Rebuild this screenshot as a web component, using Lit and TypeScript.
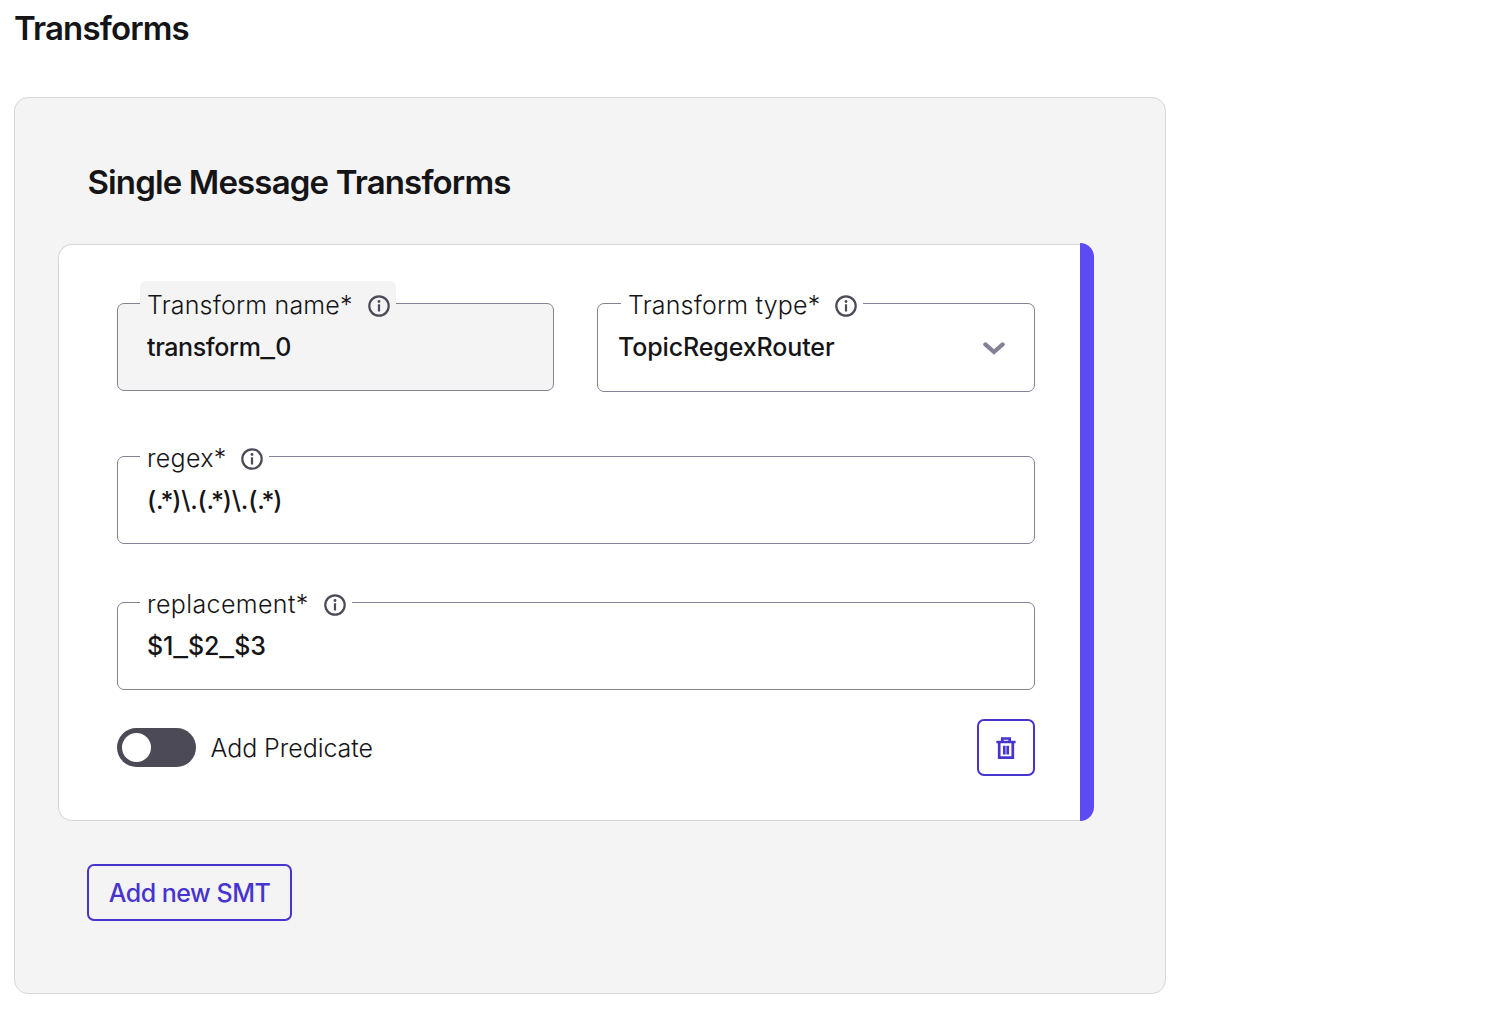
import { LitElement, html, css, svg } from "lit";
import { customElement, property } from "lit/decorators.js";

const infoIcon = html`<svg class="info" width="22" height="22" viewBox="0 0 22 22">
  <circle cx="11" cy="11" r="9.7" fill="none" stroke="#4b4a56" stroke-width="2.2" />
  <circle cx="11" cy="6.5" r="1.4" fill="#4b4a56" />
  <rect x="9.9" y="9.3" width="2.2" height="7.2" fill="#4b4a56" />
</svg>`;

const chevron = svg`<path d="M2.4 2.4 L11 10 L19.6 2.4" fill="none" stroke="#838195" stroke-width="4.2" stroke-linecap="round" stroke-linejoin="miter" />`;

/** Splits a value so that stars and underscores can be spaced on their own. */
const glyphs = (value: string) =>
  value.split(/(\.\*|_)/).map((part) =>
    part === "_"
      ? html`<span class="under">_</span>`
      : part === ".*"
        ? html`<span class="dot">.</span><span class="star">*</span>`
        : part
  );

@customElement("smt-field")
export class SmtField extends LitElement {
  @property() label = "";
  @property() value = "";
  @property({ type: Boolean }) select = false;
  @property({ type: Boolean }) locked = false;

  static styles = css`
    :host { display: block; }
    .box {
      box-sizing: border-box;
      position: relative;
      height: 88px;
      border: 1px solid #838195;
      border-radius: 7px;
      padding: 0 29px;
      display: flex;
      justify-content: space-between;
      align-items: center;
      background: #fff;
    }
    .locked { background: #f4f4f4; }
    .select { height: 89px; padding-left: 20px; }
    .legend {
      position: absolute;
      left: 22px;
      top: -23px;
      height: 46px;
      box-sizing: border-box;
      padding: 2px 6px 0 7px;
      display: flex;
      align-items: center;
      gap: 15px;
      background: #fff;
      border-radius: 6px 6px 0 0;
      font-weight: 300;
      letter-spacing: var(--label-spacing, 0.27px);
      line-height: 40px;
      white-space: nowrap;
    }
    .locked .legend { background: #f4f4f4; }
    .select .legend { left: 23px; }
    .info { display: block; flex: none; margin-top: 1px; }
    .value {
      font-weight: 500;
      letter-spacing: -0.2px;
      line-height: 40px;
      white-space: nowrap;
    }
    .locked .value { letter-spacing: -0.38px; }
    .select .value { letter-spacing: -0.12px; margin-bottom: 1px; }
    .under {
      display: inline-block;
      transform: translateY(1px) scaleX(1.28);
      padding: 0 1.8px;
    }
    .dot { letter-spacing: -3.2px; }
    .star { display: inline-block; transform: translateY(1px); letter-spacing: -1.3px; }
    .arrow { display: block; margin-top: 2px; }
  `;

  render() {
    return html`<div class="box ${this.select ? "select" : ""} ${this.locked ? "locked" : ""}">
      <span class="value">${glyphs(this.value)}</span>
      ${this.select
        ? html`<svg class="arrow" width="22" height="13" viewBox="0 0 22 13">${chevron}</svg>`
        : ""}
      <div class="legend"><span>${this.label}</span>${infoIcon}</div>
    </div>`;
  }
}

@customElement("app-root")
export class AppRoot extends LitElement {
  static styles = css`
    :host {
      display: block;
      height: 1028px;
      box-sizing: border-box;
      padding: 0 0 0 14px;
      overflow: hidden;
      background: #fff;
      color: #151517;
      font: 400 25px/40px Inter, "Liberation Sans", sans-serif;
    }
    h1, h2 { margin: 0; font-size: 33px; line-height: 40px; font-weight: 600; white-space: nowrap; letter-spacing: -0.85px; }
    h1 { padding: 8px 0 49px 0; }
    h2 { padding-left: 29.4px; }
    .panel {
      box-sizing: border-box;
      width: 1152px;
      height: 897px;
      border: 1px solid #d7d7d9;
      border-radius: 14px;
      background: #f4f4f4;
      padding: 64px 71px 0 43px;
    }
    .card {
      display: flex;
      height: 578px;
      margin: 41px 0 43px;
    }
    .body {
      flex: 1;
      box-sizing: border-box;
      margin-top: 1px;
      border: 1px solid #d7d7d9;
      border-right: 0;
      border-radius: 14px 0 0 14px;
      background: #fff;
      padding: 58px 45px 0 58px;
    }
    .bar { width: 14px; background: #5c4af5; border-radius: 0 14px 14px 0; }
    .pair { display: grid; grid-template-columns: 437px 438px; gap: 43px; height: 153px; --label-spacing: 0.18px; }
    .row { height: 146px; }
    .last { height: 116px; --label-spacing: 0.38px; }
    .foot { display: flex; align-items: center; justify-content: space-between; height: 58px; }
    .switch { display: flex; align-items: center; gap: 14.5px; font-weight: 300; white-space: nowrap; letter-spacing: -0.06px; }
    .caption { padding-top: 2px; }
    .track {
      box-sizing: border-box;
      width: 79px;
      height: 39px;
      border-radius: 20px;
      background: #4b4a56;
      padding: 5px;
    }
    .knob { width: 29px; height: 29px; border-radius: 50%; background: #fff; }
    button {
      box-sizing: border-box;
      height: 57px;
      border: 2px solid #4734cf;
      border-radius: 7px;
      background: transparent;
      color: #4734cf;
      font: inherit;
      padding: 0;
      display: flex;
      align-items: center;
      justify-content: center;
      white-space: nowrap;
    }
    .del { width: 58px; }
    .bin { margin-top: 2px; }
    .add { width: 205px; margin-left: 29px; font-weight: 500; letter-spacing: -0.5px; }
  `;

  render() {
    return html`
      <h1>Transforms</h1>
      <section class="panel">
        <h2>Single Message Transforms</h2>
        <div class="card">
          <div class="body">
            <div class="pair">
              <smt-field locked label="Transform name*" value="transform_0"></smt-field>
              <smt-field select label="Transform type*" value="TopicRegexRouter"></smt-field>
            </div>
            <smt-field class="row" label="regex*" value="(.*)\\.(.*)\\.(.*)"></smt-field>
            <smt-field class="last" label="replacement*" value="$1_$2_$3"></smt-field>
            <div class="foot">
              <div class="switch"><div class="track"><div class="knob"></div></div><span class="caption">Add Predicate</span></div>
              <button class="del" aria-label="Delete">
                <svg class="bin" width="20" height="22" viewBox="0 0 20 22" fill="none" stroke="#4734cf">
                  <path d="M0.4 5H19.6M6.3 4V1.5H13.7V4M3.2 5V20.6H16.8V5" stroke-width="2.7" />
                  <path d="M8.3 8.8V17.4M11.7 8.8V17.4" stroke-width="2.7" />
                </svg>
              </button>
            </div>
          </div>
          <div class="bar"></div>
        </div>
        <button class="add">Add new SMT</button>
      </section>
    `;
  }
}
